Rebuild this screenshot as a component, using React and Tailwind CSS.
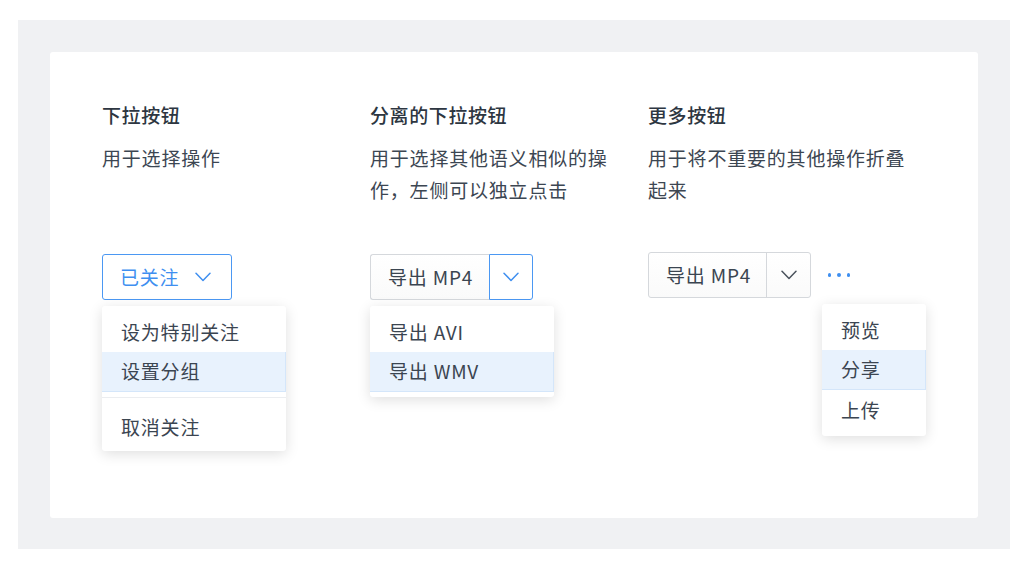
import React from 'react';

const font = { fontFamily: '"Noto Sans CJK SC", "Noto Sans", sans-serif' };

const Chevron = ({ className = '' }) => (
  <svg width="16" height="10" viewBox="0 0 16 10" fill="none" className={className}>
    <path d="M1 1.2 L8 8.5 L15 1.2" stroke="currentColor" strokeWidth="1.5" strokeLinecap="round" strokeLinejoin="round" />
  </svg>
);

const MenuItem = ({ children, active }) => (
  <div
    className={`flex h-[40px] items-center pl-[19px] text-[19px] tracking-[0.8px] text-[#3b4551] ${
      active ? 'border-r border-b border-[#d4e6fa] bg-[#e8f2fd]' : ''
    }`}
  >
    {children}
  </div>
);

const Menu = ({ width, className = '', children }) => (
  <div
    className={`absolute left-0 z-10 rounded-[3px] bg-white shadow-[0_3px_14px_rgba(0,0,0,0.13)] ${width} ${className}`}
  >
    {children}
  </div>
);

const Header = ({ title, desc, descWidth }) => (
  <div className="h-[155px]">
    <h3 className="text-[19px] leading-[32px] font-medium tracking-[0.6px] text-[#2d3641]">{title}</h3>
    <p className={`mt-[11px] text-[19px] leading-[32px] tracking-[0.8px] text-[#3c4652] ${descWidth}`}>{desc}</p>
  </div>
);

export default function App() {
  return (
    <div className="h-[578px] w-full bg-white pt-[20px] pl-[18px]" style={font}>
      <div className="h-[529px] w-[992px] bg-[#f0f1f3] pt-[32px] pl-[32px]">
        <div className="flex h-[466px] w-[928px] rounded-[3px] bg-white pt-[47px] pl-[52px]">
          {/* 下拉按钮 */}
          <div className="w-[268px]">
            <Header title="下拉按钮" desc="用于选择操作" descWidth="w-[245px]" />
            <div className="relative">
              <button className="flex h-[46px] w-[130px] items-center rounded-[3px] border border-[#4b98f3] bg-white pl-[17px] text-[19px] tracking-[0.8px] text-[#3f8ff0]">
                <span>已关注</span>
                <Chevron className="ml-[16px] text-[#3f8ff0]" />
              </button>
              <Menu width="w-[184px]" className="top-[52px] pt-[6px] pb-[4px]">
                <MenuItem>设为特别关注</MenuItem>
                <MenuItem active>设置分组</MenuItem>
                <div className="mt-[5px] mb-[9px] h-px bg-[#ebedf0]" />
                <MenuItem>取消关注</MenuItem>
              </Menu>
            </div>
          </div>

          {/* 分离的下拉按钮 */}
          <div className="w-[278px]">
            <Header
              title="分离的下拉按钮"
              desc="用于选择其他语义相似的操作，左侧可以独立点击"
              descWidth="w-[250px]"
            />
            <div className="relative">
              <div className="flex h-[46px]">
                <button className="flex w-[119px] items-center rounded-l-[3px] border-y border-l border-[#d5d8dc] bg-gradient-to-b from-white to-[#fafafa] pl-[17px] text-[19px] tracking-[0.8px] text-[#3b4551]">
                  导出 MP4
                </button>
                <button className="flex w-[44px] items-center justify-center rounded-r-[3px] border border-[#4b98f3] bg-white text-[#3f8ff0]">
                  <Chevron />
                </button>
              </div>
              <Menu width="w-[184px]" className="top-[52px] pt-[6px] pb-[5px]">
                <MenuItem>导出 AVI</MenuItem>
                <MenuItem active>导出 WMV</MenuItem>
              </Menu>
            </div>
          </div>

          {/* 更多按钮 */}
          <div className="w-[280px]">
            <Header
              title="更多按钮"
              desc="用于将不重要的其他操作折叠起来"
              descWidth="w-[272px]"
            />
            <div className="-mt-[2px] flex items-start gap-[11px]">
              <div className="flex h-[46px] rounded-[3px] border border-[#d5d8dc] bg-gradient-to-b from-white to-[#fafafa]">
                <button className="flex w-[118px] items-center border-r border-[#d5d8dc] pl-[17px] text-[19px] tracking-[0.8px] text-[#3b4551]">
                  导出 MP4
                </button>
                <button className="flex w-[43px] items-center justify-center text-[#4a525c]">
                  <Chevron />
                </button>
              </div>
              <div className="relative">
                <button className="flex h-[46px] w-[34px] items-center justify-center gap-[6px]">
                  <span className="h-[3.5px] w-[3.5px] rounded-full bg-[#3f8ff0]" />
                  <span className="h-[3.5px] w-[3.5px] rounded-full bg-[#3f8ff0]" />
                  <span className="h-[3.5px] w-[3.5px] rounded-full bg-[#3f8ff0]" />
                </button>
                <Menu width="w-[104px]" className="top-[52px] py-[6px]">
                  <MenuItem>预览</MenuItem>
                  <MenuItem active>分享</MenuItem>
                  <MenuItem>上传</MenuItem>
                </Menu>
              </div>
            </div>
          </div>
        </div>
      </div>
    </div>
  );
}
